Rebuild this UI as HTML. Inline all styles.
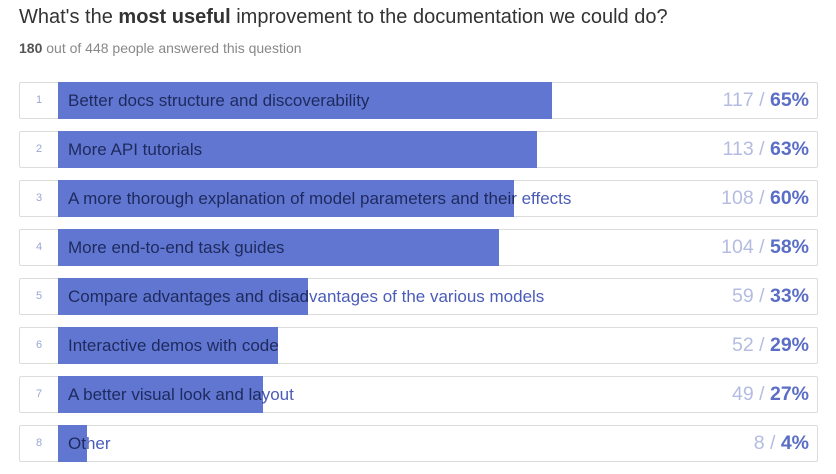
<!DOCTYPE html>
<html><head><meta charset="utf-8"><style>
body{margin:0;width:836px;height:474px;background:#fff;font-family:"Liberation Sans",sans-serif;overflow:hidden;position:relative}
h1{position:absolute;left:19px;top:6px;margin:0;font-size:20px;font-weight:normal;color:#333}
.sub{position:absolute;left:19px;top:40px;font-size:14px;color:#888}
.sub b{color:#555}
.row{position:absolute;left:19px;width:797px;height:35px;border:1px solid #dcdcdc;border-radius:2px;background:#fff}
.num{position:absolute;left:0;width:38px;top:0;line-height:35px;text-align:center;font-size:11px;color:#9aa6d6}
.lbl{position:absolute;left:48px;top:0;line-height:35px;font-size:17px;color:#4a5cb8;white-space:nowrap}
.bar{position:absolute;left:38px;top:-1px;height:37px;background:#6076d0;overflow:hidden}
.bar .lbl{left:10px;top:1px;color:#1e2a5e}
.val{position:absolute;right:8px;top:0;line-height:35px;font-size:19.5px;color:#b4bce2}
.val b{color:#5b6ec6}
</style></head><body>
<h1>What's the <b>most useful</b> improvement to the documentation we could do?</h1>
<div class="sub"><b>180</b> out of 448 people answered this question</div>

<div class="row" style="top:82px"><div class="num">1</div><div class="lbl">Better docs structure and discoverability</div><div class="bar" style="width:494px"><div class="lbl">Better docs structure and discoverability</div></div><div class="val">117 / <b>65%</b></div></div>
<div class="row" style="top:131px"><div class="num">2</div><div class="lbl">More API tutorials</div><div class="bar" style="width:479px"><div class="lbl">More API tutorials</div></div><div class="val">113 / <b>63%</b></div></div>
<div class="row" style="top:180px"><div class="num">3</div><div class="lbl">A more thorough explanation of model parameters and their effects</div><div class="bar" style="width:456px"><div class="lbl">A more thorough explanation of model parameters and their effects</div></div><div class="val">108 / <b>60%</b></div></div>
<div class="row" style="top:229px"><div class="num">4</div><div class="lbl">More end-to-end task guides</div><div class="bar" style="width:441px"><div class="lbl">More end-to-end task guides</div></div><div class="val">104 / <b>58%</b></div></div>
<div class="row" style="top:278px"><div class="num">5</div><div class="lbl">Compare advantages and disadvantages of the various models</div><div class="bar" style="width:250px"><div class="lbl">Compare advantages and disadvantages of the various models</div></div><div class="val">59 / <b>33%</b></div></div>
<div class="row" style="top:327px"><div class="num">6</div><div class="lbl">Interactive demos with code</div><div class="bar" style="width:220px"><div class="lbl">Interactive demos with code</div></div><div class="val">52 / <b>29%</b></div></div>
<div class="row" style="top:376px"><div class="num">7</div><div class="lbl">A better visual look and layout</div><div class="bar" style="width:205px"><div class="lbl">A better visual look and layout</div></div><div class="val">49 / <b>27%</b></div></div>
<div class="row" style="top:425px"><div class="num">8</div><div class="lbl">Other</div><div class="bar" style="width:29px"><div class="lbl">Other</div></div><div class="val">8 / <b>4%</b></div></div>
</body></html>
